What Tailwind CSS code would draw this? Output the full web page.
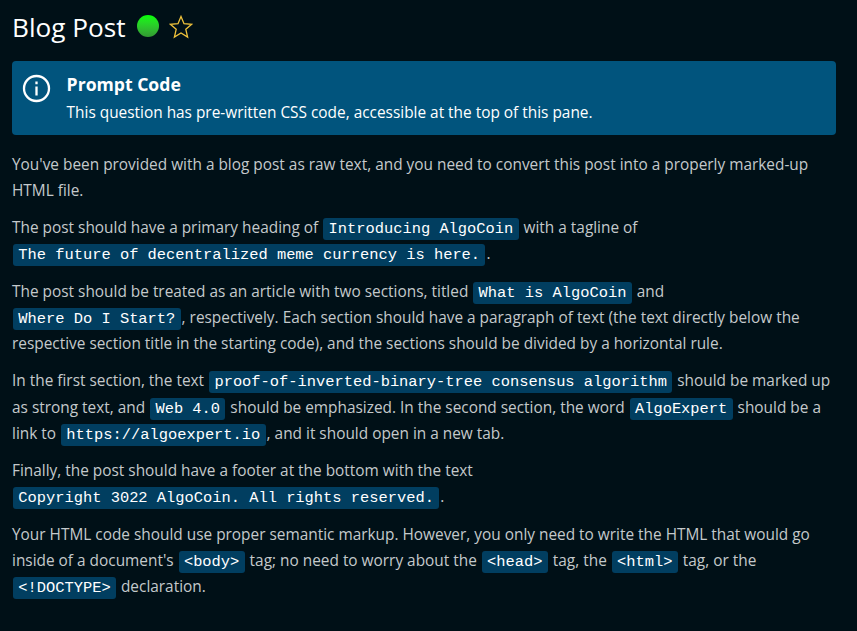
<!DOCTYPE html>
<html lang="en"><head><meta charset="utf-8"><title>Blog Post</title>
<script src="https://cdn.jsdelivr.net/npm/@tailwindcss/browser@4"></script></head>
<body class="bg-[#001017] font-['Open_Sans',sans-serif]">
<main class="w-[857px] h-[631px] overflow-hidden pl-3 pr-[21px] text-[15.4px] leading-[26.18px] text-[#c4c9cb]">
<header class="flex items-center h-[54px] text-white"><h1 class="w-[114px] pt-px whitespace-nowrap text-[26.2px]">Blog Post</h1>
<span class="ml-[11px] mb-[2px] size-[22px] rounded-full bg-linear-to-b from-[#00ff00] to-[#329932]"></span>
<svg class="ml-[10px] mb-[1px] size-6" viewBox="0 0 24 24" fill="none" stroke="#f0c33c" stroke-width="1.300"><path d="M12 1.500l3 7.200 7.700.6-5.900 5 1.800 7.700-6.600-4.100L5.400 22l1.800-7.700-5.900-5 7.700-.6z"/></svg></header>
<section class="mt-[7px] flex h-[74px] rounded bg-[#01547d] pl-[10px] pt-[10px] text-white">
<svg class="mt-[3px] size-[29px]" viewBox="0 0 29 29" fill="none" stroke="white" stroke-width="2.300"><circle cx="14.500" cy="14.500" r="12.500"/><path d="M14.500 12.500v9M14.500 7.500v2.700"/></svg>
<div class="ml-[15.6px]"><h2 class="font-bold text-[17.6px] leading-[27px]">Prompt Code</h2><p class="leading-[30px]">This question has pre-written CSS code, accessible at the top of this pane.</p></div></section>
<article class="mt-[16.6px] flex flex-col gap-[11.2px] whitespace-nowrap [&_code]:mx-px [&_code]:rounded-[3px] [&_code]:bg-[#013e60] [&_code]:px-[5.3px] [&_code]:pt-[2px] [&_code]:pb-[2px] [&_code]:font-['Liberation_Mono',monospace] [&_code]:leading-none [&_code]:text-white">
<p>You've been provided with a blog post as raw text, and you need to convert this post into a properly marked-up<br>HTML file.</p>
<p>The post should have a primary heading of <code>Introducing AlgoCoin</code> with a tagline of<br><code>The future of decentralized meme currency is here.</code>.</p>
<p>The post should be treated as an article with two sections, titled <code>What is AlgoCoin</code> and<br><code>Where Do I Start?</code>, respectively. Each section should have a paragraph of text (the text directly below the<br>respective section title in the starting code), and the sections should be divided by a horizontal rule.</p>
<p>In the first section, the text <code>proof-of-inverted-binary-tree consensus algorithm</code> should be marked up<br>as strong text, and <code>Web 4.0</code> should be emphasized. In the second section, the word <code>AlgoExpert</code> should be a<br>link to <code>https://algoexpert.io</code>, and it should open in a new tab.</p>
<p>Finally, the post should have a footer at the bottom with the text<br><code>Copyright 3022 AlgoCoin. All rights reserved.</code>.</p>
<p>Your HTML code should use proper semantic markup. However, you only need to write the HTML that would go<br>inside of a document's <code>&lt;body&gt;</code> tag; no need to worry about the <code>&lt;head&gt;</code> tag, the <code>&lt;html&gt;</code> tag, or the<br><code>&lt;!DOCTYPE&gt;</code> declaration.</p>
</article>
</main></body></html>
